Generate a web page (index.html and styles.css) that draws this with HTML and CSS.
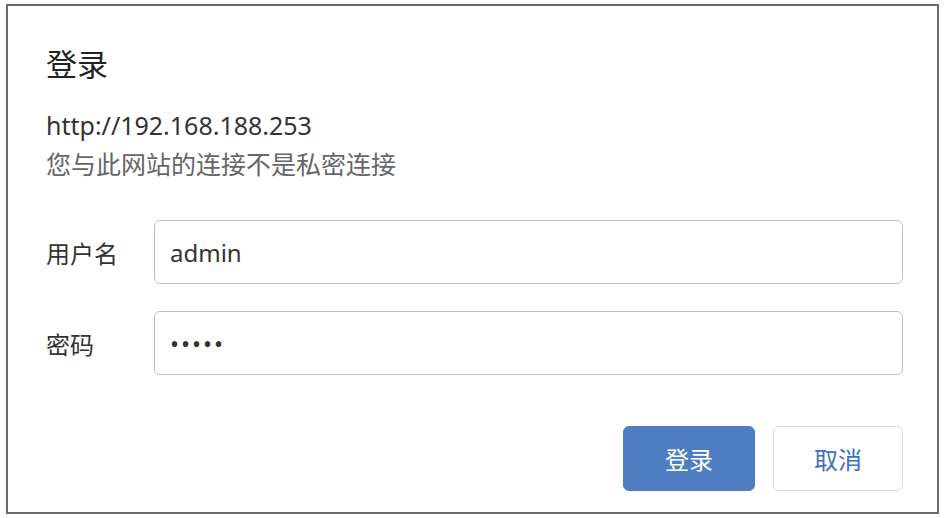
FILE: index.html
```html
<!DOCTYPE html>
<html lang="zh-CN">
<head>
    <meta charset="UTF-8">
    <meta name="viewport" content="width=device-width, initial-scale=1.0">
    <title>登录</title>
    <link rel="stylesheet" href="styles.css">
</head>
<body>
    <div class="dialog">
        <div class="title">登录</div>
        <div class="url">http://192.168.188.253</div>
        <div class="note">您与此网站的连接不是私密连接</div>

        <form class="form" onsubmit="return false;">
            <div class="row">
                <label class="label" for="user">用户名</label>
                <input class="field" id="user" type="text" value="admin">
            </div>
            <div class="row">
                <label class="label" for="pass">密码</label>
                <input class="field field-pass" id="pass" type="password" value="admin">
            </div>

            <div class="actions">
                <button class="btn btn-primary" type="submit">登录</button>
                <button class="btn btn-cancel" type="button">取消</button>
            </div>
        </form>
    </div>
</body>
</html>
```

FILE: styles.css
```css
body {
    margin: 0;
    background: #fff;
    font-family: "Noto Sans", "Noto Sans CJK SC", sans-serif;
    color: #333;
}

.dialog {
    box-sizing: border-box;
    width: 933px;
    height: 510px;
    margin: 4px 0 0 6px;
    border: 2px solid #6b6b6b;
    padding: 40px 34px 0 38px;
}

.title {
    font-size: 31px;
    line-height: 36px;
    color: #222;
}

.url {
    margin-top: 27px;
    font-size: 25px;
    line-height: 32px;
    color: #333;
}

.note {
    margin-top: 7px;
    font-size: 25px;
    line-height: 32px;
    color: #666;
}

.form {
    margin-top: 40px;
}

.row {
    display: flex;
    align-items: center;
    margin-bottom: 27px;
}

.label {
    width: 108px;
    flex-shrink: 0;
    font-size: 24px;
    color: #333;
}

.field {
    flex: 1;
    box-sizing: border-box;
    height: 64px;
    padding: 0 15px;
    border: 1px solid #bfbfbf;
    border-radius: 6px;
    font-family: "Noto Sans", "Noto Sans CJK SC", sans-serif;
    font-size: 24px;
    color: #333;
    outline: none;
}

.field-pass {
    letter-spacing: 2px;
}

.actions {
    display: flex;
    justify-content: flex-end;
    gap: 18px;
    margin-top: 51px;
}

.btn {
    box-sizing: border-box;
    height: 65px;
    border-radius: 6px;
    font-family: "Noto Sans", "Noto Sans CJK SC", sans-serif;
    font-size: 24px;
    cursor: pointer;
}

.btn-primary {
    width: 132px;
    background: #4f7dc2;
    border: 1px solid #4f7dc2;
    color: #fff;
}

.btn-cancel {
    width: 130px;
    background: #fff;
    border: 1px solid #dadce0;
    color: #4070bd;
}
```
